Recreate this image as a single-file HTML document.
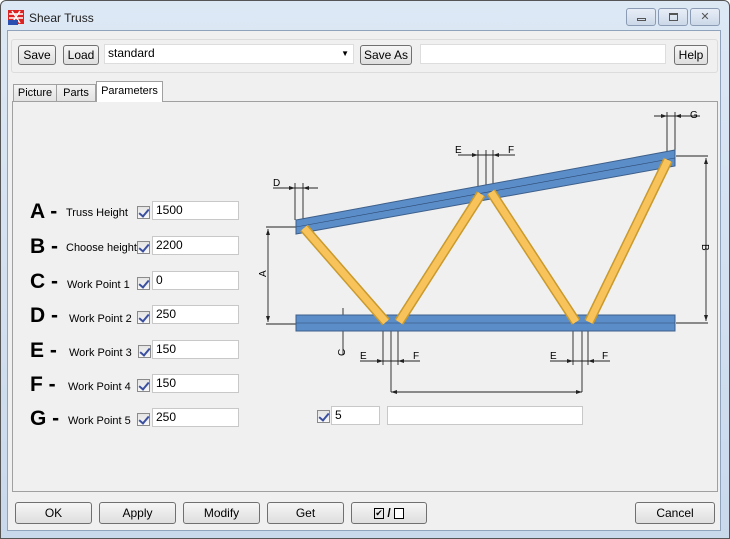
<!DOCTYPE html>
<html><head><style>
*{box-sizing:border-box}
body{margin:0;width:730px;height:539px;background:#fff;font-family:"Liberation Sans",sans-serif;font-size:12px;overflow:hidden;position:relative}
.win{position:absolute;left:0;top:0;width:730px;height:539px;border:1px solid #555;border-radius:6px 6px 0 0;background:linear-gradient(#dde8f5,#c9d9ec);}
.body{position:absolute;left:7px;top:30px;width:714px;height:501px;background:#f0f0f0;border:1px solid #8fa3bd}
.abs{position:absolute}
.btn{position:absolute;border:1px solid #707070;border-radius:3px;background:linear-gradient(#f6f6f6,#dedede);text-align:center;font-size:12px;color:#000;line-height:18px}
.tb{position:absolute;background:#fff;border:1px solid #c8c8c8;font-size:12px;padding-left:3px;line-height:17px}
.cb{position:absolute;width:13px;height:13px;border:1px solid #8a8a8a;background:linear-gradient(#e4e4e4,#f8f8f8)}
.cb:after{content:"";position:absolute;left:3px;top:0px;width:4px;height:8px;border:solid #3a4fa0;border-width:0 2px 2px 0;transform:rotate(40deg)}
.big{position:absolute;font-weight:bold;font-size:21px;left:30px}
.lbl{position:absolute;font-size:11px}
.wb{position:absolute;top:8px;width:30px;height:18px;border:1px solid #8a9bb3;border-radius:3px;background:linear-gradient(#e8eef7,#ccd8e8)}
</style></head><body>
<div class="win"></div>
<svg class="abs" style="left:8px;top:10px" width="16" height="16"><rect x="0" y="0" width="16" height="14" fill="#d22"/><path d="M1 4h14M1 8h14M4 1l8 12M12 1L4 13" stroke="#fff" stroke-width="1.5"/><rect x="0" y="10" width="10" height="5" fill="#2a4fb0"/></svg>
<div class="abs" style="left:29px;top:11px;font-size:12px;color:#222">Shear Truss</div>
<div class="wb" style="left:626px"><div class="abs" style="left:10px;top:9px;width:9px;height:3px;border:1px solid #555"></div></div>
<div class="wb" style="left:658px"><div class="abs" style="left:10px;top:4px;width:9px;height:8px;border:1px solid #555;border-top-width:2px"></div></div>
<div class="wb" style="left:690px;text-align:center;font-size:11px;line-height:16px;color:#555">✕</div>
<div class="body"></div>
<div class="abs" style="left:11px;top:39px;width:707px;height:34px;border:1px solid #dcdcdc;border-radius:3px;background:#f0f0f0"></div>
<div class="btn" style="left:18px;top:45px;width:38px;height:20px">Save</div>
<div class="btn" style="left:63px;top:45px;width:36px;height:20px">Load</div>
<div class="tb" style="left:104px;top:44px;width:250px;height:20px;border-color:#ddd">standard<span style="position:absolute;right:4px;top:0;font-size:8px">▼</span></div>
<div class="btn" style="left:360px;top:45px;width:52px;height:20px">Save As</div>
<div class="tb" style="left:420px;top:44px;width:246px;height:20px;border-color:#ddd"></div>
<div class="btn" style="left:674px;top:45px;width:34px;height:20px">Help</div>
<div class="abs" style="left:12px;top:101px;width:706px;height:391px;border:1px solid #a0a0a0;background:#f0f0f0"></div>
<div class="abs" style="left:13px;top:84px;width:44px;height:18px;border:1px solid #a0a0a0;background:linear-gradient(#f4f4f4,#e2e2e2);font-size:11px;text-align:center;line-height:17px">Picture</div>
<div class="abs" style="left:56px;top:84px;width:40px;height:18px;border:1px solid #a0a0a0;background:linear-gradient(#f4f4f4,#e2e2e2);font-size:11px;text-align:center;line-height:17px">Parts</div>
<div class="abs" style="left:96px;top:81px;width:67px;height:21px;border:1px solid #a0a0a0;border-bottom:none;background:#fff;font-size:11px;text-align:center;line-height:18px">Parameters</div>

<div class="big" style="top:200px">A -</div><div class="lbl" style="left:66px;top:207px">Truss Height</div><div class="cb" style="left:137px;top:206px"></div><div class="tb" style="left:152px;top:201px;width:87px;height:19px">1500</div>
<div class="big" style="top:235px">B -</div><div class="lbl" style="left:66px;top:242px">Choose height</div><div class="cb" style="left:137px;top:241px"></div><div class="tb" style="left:152px;top:236px;width:87px;height:19px">2200</div>
<div class="big" style="top:270px">C -</div><div class="lbl" style="left:67px;top:279px">Work Point 1</div><div class="cb" style="left:137px;top:277px"></div><div class="tb" style="left:152px;top:271px;width:87px;height:19px">0</div>
<div class="big" style="top:304px">D -</div><div class="lbl" style="left:69px;top:313px">Work Point 2</div><div class="cb" style="left:137px;top:311px"></div><div class="tb" style="left:152px;top:305px;width:87px;height:19px">250</div>
<div class="big" style="top:339px">E -</div><div class="lbl" style="left:69px;top:347px">Work Point 3</div><div class="cb" style="left:138px;top:345px"></div><div class="tb" style="left:152px;top:340px;width:87px;height:19px">150</div>
<div class="big" style="top:373px">F -</div><div class="lbl" style="left:68px;top:381px">Work Point 4</div><div class="cb" style="left:137px;top:379px"></div><div class="tb" style="left:152px;top:374px;width:87px;height:19px">150</div>
<div class="big" style="top:407px">G -</div><div class="lbl" style="left:68px;top:415px">Work Point 5</div><div class="cb" style="left:137px;top:413px"></div><div class="tb" style="left:152px;top:408px;width:87px;height:19px">250</div>

<svg class="abs" style="left:0;top:0" width="730" height="539" font-family="Liberation Sans" font-size="9">
<g stroke="#222" stroke-width="0.9" fill="none">
<path d="M266 227H296M266 324H296M268 229V322M676 156H708M676 323H708M706 158V321"/>
<path d="M295 220V183M303 220V183M273 188H318"/>
<path d="M478 187V150M486 188V150M493 186V150M458 155H515"/>
<path d="M667 152V112M675 152V112M654 116H700"/>
<path d="M383 324V365M391 324V365M398 324V365M360 361H420M391 365V392M391 392H582M582 365V392"/>
<path d="M573 324V365M582 324V365M588 324V365M550 361H610"/>
<path d="M343 308V355"/>
</g>
<g fill="#222"><path d="M268 229l-2 6h4zM268 322l-2-6h4zM706 158l-2 6h4zM706 321l-2-6h4zM391 392l6-2v4zM582 392l-6-2v4zM383 361l-6-2v4zM398 361l6-2v4zM573 361l-6-2v4zM588 361l6-2v4zM295 188l-6-2v4zM303 188l6-2v4zM478 155l-6-2v4zM493 155l6-2v4zM667 116l-6-2v4zM675 116l6-2v4z"/></g>
<path d="M296 220L675 150V166L296 234Z" fill="#5b8dc9" stroke="#3d5f8a"/>
<path d="M296 227L675 158" stroke="#2e4a70" stroke-width="0.6"/>
<rect x="296" y="315" width="379" height="16" fill="#5b8dc9" stroke="#3d5f8a"/>
<path d="M296 323H675" stroke="#2e4a70" stroke-width="0.6"/>
<g stroke="#c99a2e" stroke-width="10" stroke-linecap="butt"><path d="M304 228L386 322M399 322L481 194M491 192L576 322M589 322L668 160"/></g>
<g stroke="#f7c35a" stroke-width="7"><path d="M304 228L386 322M399 322L481 194M491 192L576 322M589 322L668 160"/></g>
<g fill="#000" font-size="10">
<text x="273" y="186">D</text><text x="455" y="153">E</text><text x="508" y="153">F</text><text x="690" y="118">G</text>
<text x="360" y="359">E</text><text x="413" y="359">F</text><text x="550" y="359">E</text><text x="602" y="359">F</text>
<text transform="translate(266 277) rotate(-90)">A</text><text transform="translate(702 244) rotate(90)">B</text><text transform="translate(345 356) rotate(-90)">C</text>
</g>
</svg>
<div class="cb" style="left:317px;top:410px"></div>
<div class="tb" style="left:331px;top:406px;width:49px;height:19px">5</div>
<div class="tb" style="left:387px;top:406px;width:196px;height:19px"></div>

<div class="btn" style="left:15px;top:502px;width:77px;height:22px;line-height:20px">OK</div>
<div class="btn" style="left:99px;top:502px;width:77px;height:22px;line-height:20px">Apply</div>
<div class="btn" style="left:183px;top:502px;width:77px;height:22px;line-height:20px">Modify</div>
<div class="btn" style="left:267px;top:502px;width:77px;height:22px;line-height:20px">Get</div>
<div class="btn" style="left:351px;top:502px;width:76px;height:22px;line-height:20px"><span style="display:inline-block;width:10px;height:11px;border:1px solid #000;font-size:9px;line-height:9px;vertical-align:middle">✔</span> <b>/</b> <span style="display:inline-block;width:10px;height:11px;border:1px solid #000;vertical-align:middle;background:#fff"></span></div>
<div class="btn" style="left:635px;top:502px;width:80px;height:22px;line-height:20px">Cancel</div>
</body></html>
